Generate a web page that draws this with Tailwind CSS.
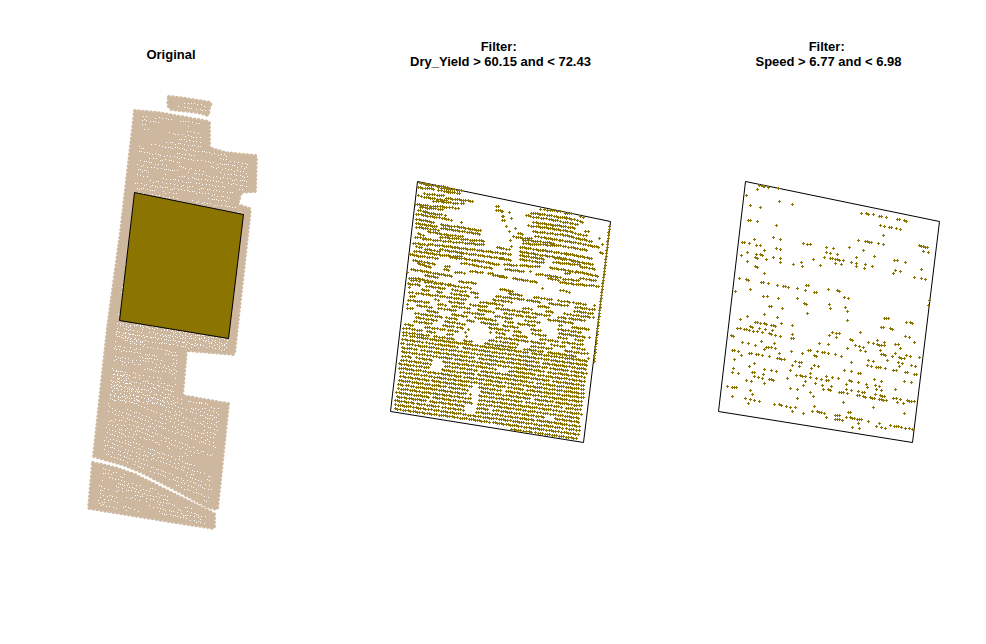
<!DOCTYPE html>
<html lang="en">
<head>
<meta charset="utf-8">
<meta name="viewport" content="width=device-width, initial-scale=1">
<title>Yield data filters</title>
<script src="https://cdn.jsdelivr.net/npm/@tailwindcss/browser@4"></script>
</head>
<body class="min-h-screen bg-white text-black font-['Liberation_Sans',Arial,sans-serif]">
<main class="grid grid-cols-[342fr_317fr_327fr] pt-[39px]">
  <figure class="flex flex-col gap-[11px]">
    <figcaption class="flex h-[30px] items-center justify-center text-center text-[13px] leading-[15px] font-bold">Original</figcaption>
    <svg class="block h-auto w-full" viewBox="0 80 342 560" role="img" aria-label="Original field points">
      <g fill="#cdb79e" stroke="#cdb79e" stroke-width="4" stroke-linecap="round" stroke-dasharray="0 4">
        <polygon points="169,97 180,98 211,103 209,108 208,115 198,112 171,109 168,105"/>
        <polygon points="135,111 158,113 209,122 209,148 225,153 256,156 255,191 241,192 237,205 250,209 234,354 186,350 182,396 228,404 217,509 208,507 175,489 142,472 125,465 94,456 108,327 121,232"/>
        <polygon points="93,463 115,468 135,475 175,495 214,514 214,528 175,522 89,508"/>
      </g>
      <path id="voids" fill="#fff" shape-rendering="crispEdges"/>
      <polygon points="134.5,192.5 243.5,214.5 228.5,338.5 119.5,320.5" fill="#8b7500" stroke="#000"/>
    </svg>
  </figure>
  <figure class="flex flex-col gap-[11px]">
    <figcaption class="flex h-[30px] items-center justify-center text-center text-[13px] leading-[15px] font-bold">Filter:&nbsp;<br>Dry_Yield &gt; 60.15 and &lt; 72.43</figcaption>
    <svg class="block h-auto w-full" viewBox="342 80 317 560" role="img" aria-label="Points filtered by dry yield">
      <polygon points="417.5,181.5 610.5,221.5 583.5,442.5 390.5,411.5" fill="none" stroke="#000"/>
      <path id="yield" fill="#8b7500" shape-rendering="crispEdges"/>
    </svg>
  </figure>
  <figure class="flex flex-col gap-[11px]">
    <figcaption class="flex h-[30px] items-center justify-center pl-3 text-center text-[13px] leading-[15px] font-bold">Filter:&nbsp;<br>Speed &gt; 6.77 and &lt; 6.98</figcaption>
    <svg class="block h-auto w-full" viewBox="659 80 327 560" role="img" aria-label="Points filtered by speed">
      <polygon points="745.5,181.5 939.5,221.5 912.5,442.5 718.5,411.5" fill="none" stroke="#000"/>
      <path id="speed" fill="#8b7500" shape-rendering="crispEdges"/>
    </svg>
  </figure>
</main>
<script>
let seed = 7;
const rnd = () => (seed = (seed * 16807) % 2147483647) / 2147483647;
const plus = (x, y) => { x = Math.floor(x); y = Math.floor(y); return `M${x-1} ${y}h3v1h-3zM${x} ${y-1}h1v3h-1z`; };
const inside = (poly, x, y) => {
  let r = false;
  for (let i = 0, j = poly.length - 1; i < poly.length; j = i++) {
    const [a, b] = poly[i], [c, d] = poly[j];
    if ((b > y) !== (d > y) && x < (c - a) * (y - b) / (d - b) + a) r = !r;
  }
  return r;
};

// Gaps between the points of the original field
const field = [[135,111],[158,113],[209,122],[209,148],[225,153],[256,156],[255,191],[241,192],[237,205],[250,209],[234,354],[186,350],[182,396],[228,404],[217,509],[208,507],[175,489],[142,472],[125,465],[94,456],[108,327],[121,232]];
const foot = [[93,463],[115,468],[135,475],[175,495],[214,514],[214,528],[175,522],[89,508]];
const cap = [[169,97],[211,103],[208,115],[171,109]];
let d = '';
const voids = (poly, y0, y1, slope, gap, mx, my, p) => {
  for (let r = y0; r < y1; r += gap) {
    let on = true;
    for (let x = 88; x < 258; x += 2 + Math.floor(rnd() * 2.9)) {
      if (rnd() < 0.25) on = rnd() < p;
      const y = r + (x - 88) * slope + Math.floor(rnd() * 1.5);
      if (on && y < y1 && inside(poly, x - mx, y) && inside(poly, x + mx, y) && inside(poly, x, y - my) && inside(poly, x, y + my))
        d += `M${x} ${Math.floor(y)}h1v1h-1z`;
    }
  }
};
voids(field, 84, 345, 0.15, 4.6, 8, 2, 0.75);
seed = 31;
voids(field, 312, 404, 0.17, 3.6, 8, 2, 0.65);
voids(field, 355, 510, 0.38, 4.4, 8, 2, 0.75);
voids(foot, 440, 530, 0.25, 3.6, 8, 3, 0.6);
voids(cap, 88, 118, 0.15, 5, 4, 3, 0.5);
document.getElementById('voids').setAttribute('d', d);

// Dry yield: runs of points [x1, y1, x2, y2] at three units per pixel
const runs = [
 [385,175,[[104,22,132,32],[120,28,190,38],[160,38,230,48],[100,38,150,43],[160,46,205,54],[190,50,230,58],[118,56,180,63],[100,62,115,66],[185,70,265,79],[118,66,185,78],[145,78,222,86],[230,84,240,88],[92,88,150,95],[150,93,222,101],[105,97,175,104],[100,106,125,110],[120,113,170,120],[180,121,182,121],[95,117,150,127],[155,127,203,136],[228,142,229,142],[95,133,150,143],[95,145,160,156],[170,149,200,155],[200,153,293,168],[170,160,290,178],[95,157,165,166],[100,175,118,181],[130,170,165,176],[170,178,240,186],[165,187,300,199],[90,187,125,190],[115,192,190,200],[190,200,300,210],[85,204,130,211],[130,208,210,217],[210,218,360,236],[95,215,115,220],[120,222,165,230],[165,224,230,234],[230,234,360,252],[88,228,170,241],[76,238,100,242],[165,241,230,246],[88,242,160,250],[195,247,230,252],[230,250,270,257],[270,256,340,270],[85,256,150,268],[100,266,140,278],[180,275,192,275],[177,284,192,286],[230,264,320,280],[68,292,69,292],[80,283,200,303],[210,292,240,295],[255,288,295,294],[310,295,325,297],[72,310,88,310],[120,301,160,308],[90,310,150,322],[160,325,200,330],[222,320,270,325],[325,300,360,306],[333,94,345,96],[335,105,357,109],[353,124,354,136],[337,217,350,220]]],
 [500,175,[[120,102,121,102],[132,104,185,111],[195,115,215,117],[240,125,252,127],[95,114,120,118],[120,118,200,130],[200,128,250,142],[80,121,105,127],[110,127,180,138],[180,140,235,149],[100,142,160,151],[160,150,225,160],[85,152,150,160],[150,160,210,170],[210,170,250,182],[255,168,265,171],[260,182,261,182],[55,175,72,178],[100,170,190,180],[190,180,275,200],[298,190,299,190],[308,208,309,208],[50,188,100,192],[105,184,180,196],[180,196,250,208],[250,208,298,217],[70,195,160,205],[70,206,170,212],[170,210,260,225],[60,217,130,228],[130,226,200,238],[200,236,280,252],[300,232,308,236],[5,220,30,224],[0,235,35,238],[60,230,120,240],[120,240,200,252],[60,241,130,253],[60,254,130,264],[165,250,220,256],[160,262,240,270],[220,258,285,270],[0,250,35,256],[150,278,230,292],[240,275,285,283],[12,268,50,272],[60,272,125,275],[15,283,70,290],[90,290,91,290],[195,295,210,297],[230,290,300,305],[110,298,130,300],[135,300,180,308],[190,312,240,318],[240,310,290,318],[0,305,20,308],[40,310,110,322],[145,310,180,318],[180,322,220,328],[230,328,300,334],[128,340,129,340],[0,342,40,350],[180,345,212,353],[3,108,4,108],[28,112,29,112],[10,125,11,125],[35,130,36,130],[8,137,22,139],[18,155,19,155],[28,168,29,168],[46,160,47,160],[30,196,31,196],[40,185,41,185],[35,214,36,214]]]
];
d = '';
for (const [ox, oy, list] of runs) for (const [a, b, c, e] of list) {
  for (let x = a; x <= c; x += rnd() < 0.75 ? 6 : 9) {
    const t = c > a ? (x - a) / (c - a) : 0;
    d += plus(ox + x / 3, oy + (b + t * (e - b)) / 3);
  }
}
const box = [[417,181],[610,221],[583,442],[390,411]];
// Areas without points: centre x, centre y, radius x, radius y
const holes = [[437,364,6,7],[475,396,4,11],[470,409,6,6],[478,334,12,9],[487,293,9,9],[535,283,26,5],[548,327,9,7],[505,369,8,2],[550,417,6,2],[520,305,14,3],[459,337,6,5],[427,298,8,3],[560,310,10,3],[583,325,10,3],[445,313,8,3]];
const fill = (from, to, gap, on, off) => {
  for (let r = from; r < to; r += gap) {
    let left = 0;
    for (let x = 385 + Math.floor(rnd() * 6); x < 606; x += rnd() < 0.7 ? 2 : 3) {
      if (left-- <= 0) { left = on * (0.3 + rnd() * 1.4); x += Math.floor(off * rnd()); }
      const y = r + (x - 425) * 0.14;
      if (inside(box, x - 3, y) && inside(box, x + 5, y) && inside(box, x, y + 1) && !holes.some(([a, b, c, e]) => ((x - a) / c) ** 2 + ((y - b) / e) ** 2 < 1)) d += plus(x, y);
    }
  }
};
fill(282, 337, 4.1, 5, 13);
fill(338.5, 426, 4.15, 18, 4);
for (let y = 226; y < 362; y += 3) d += plus(610 - (y - 222) * 0.115, y);
document.getElementById('yield').setAttribute('d', d);

// Speed: single points, three units per pixel
const pts = [
 [710,175,[149,31,155,31,160,33,164,34,176,37,143,43,206,40,110,61,209,79,248,88,122,91,152,97,115,136,122,136,143,139,200,151,191,187,212,193,134,193,97,202,103,202,119,205,140,211,152,211,200,220,212,223,164,226,113,232,95,241,140,238,152,238,157,241,137,247,143,250,170,253,191,247,212,250,212,262,113,259,137,274,143,277,164,295,281,205,293,208,301,208,350,217,350,232,344,247,311,253,275,262,251,268,278,274,332,271,89,310,110,313,116,316,155,322,161,322,176,325,203,331,221,334,227,334,236,337,263,340,289,331,295,331,287,346,314,352,320,352,356,343,77,349,122,343,161,364,173,364,206,370,263,370,284,385,290,388,179,394,185,394,218,400,358,388,164,418,293,415]],
 [825,175,[110,115,125,115,130,118,146,118,164,124,170,124,185,127,218,133,224,133,238,136,245,139,167,151,179,154,194,157,200,157,215,160,227,163,176,181,101,196,122,199,128,199,134,202,140,202,161,205,176,208,284,211,290,214,296,214,301,217,308,217,296,229,311,232,5,217,26,220,74,217,116,226,5,232,17,235,38,238,149,244,95,247,17,250,23,250,32,253,38,253,44,256,56,256,32,265,50,268,80,262,95,265,95,274,122,268,119,280,143,274,209,256,218,256,242,262,212,286,227,289,206,295,290,283,269,307,290,310,302,313,313,376,311,391,11,343,38,346,44,349,59,367,71,370,14,388,17,400,62,397,68,409]],
 [710,310,[113,19,164,13,203,22,92,28,137,37,143,37,152,40,164,40,170,43,185,46,191,46,197,49,215,40,248,46,122,49,128,52,149,55,83,55,92,55,104,58,110,58,119,61,131,64,143,64,167,58,188,61,158,67,179,70,185,73,197,76,212,79,65,76,71,79,248,73,245,85,251,85,155,94,98,97,116,100,137,106,194,100,170,112,176,112,185,112,197,115,164,118,68,121,74,121,86,124,95,136,119,130,125,130,140,133,146,133,158,136,179,139,209,130,245,124,74,148,203,145,209,145,215,148,224,148,296,121,302,121,278,130,329,100,323,124,338,127,344,127,356,130,314,136,320,139,257,154,269,157,275,157,248,166,269,169,242,181,134,160,119,169,71,175,68,187,86,190,164,178,185,181,200,184,128,187,134,187,161,193,134,199,146,202,158,205,179,208,185,208,191,211,164,220,110,211,125,214,233,205,260,196,272,196,278,199,287,199,302,190,314,166,326,169,305,175,302,202,320,205,335,208,350,199,350,211,287,214,281,226,317,220,338,226,341,238,242,235,263,238,302,247,311,259,263,265,53,229,68,232,74,232,80,232,122,241,128,253,68,259,107,265,122,268,134,271,149,274,116,280,194,283,209,283,215,286,230,289,242,292,257,292,248,304,281,310,308,304,314,289,323,304,329,307,335,307,344,310,350,322]],
 [825,310,[68,4,68,31,179,25,185,25,191,25,245,37,257,37,263,40,170,52,176,52,197,55,203,58,23,67,14,76,35,70,44,70,35,82,107,67,77,88,83,91,242,79,254,82,269,97,11,103,68,115,92,106,104,109,116,112,107,121,122,124,131,97,146,100,158,91,158,103,164,106,170,106,179,97,179,106,212,103,221,103,227,115,167,121,170,133,176,133,182,136,212,130,203,139,11,130,32,133,50,139,224,142,230,145,239,145,245,136,257,139,284,142,80,157,131,151,146,154,188,151,221,157,233,160,128,166,140,169,155,172,161,172,167,172,182,175,224,169,260,166,272,169,59,181,80,184,101,190,107,190,206,181,215,181,242,187,248,187,269,193,275,193,5,199,23,202,41,205,5,211,11,211,74,211,80,214,101,217,149,208,170,214,65,223,125,223,128,232,152,226,164,229,239,214,260,217,212,238,20,229,11,238,17,241,65,238,80,241,155,238,170,241,44,247,50,247,56,247,68,250,101,244,113,247,119,247,98,256,104,256,116,259,122,262,152,253,137,262,143,265,149,265,167,256,173,259,179,259,164,268,170,268,176,271,185,271,206,265,215,265,227,268,218,277,236,280,248,271,254,274,260,274,269,274,56,277,146,292,239,310,71,307,77,307,32,316,38,316,44,316,5,322,32,328,38,328,44,328,53,331,65,322,77,322,83,325,89,325,98,328,104,328,110,328,131,334,101,340,83,352,104,355,164,340,155,349,170,352,182,355,197,346,209,349,215,349,221,349,230,352,242,355,254,355,263,358]]
];
d = '';
for (const [ox, oy, p] of pts) for (let i = 0; i < p.length; i += 2) d += plus(ox + p[i] / 3, oy + p[i + 1] / 3);
document.getElementById('speed').setAttribute('d', d);
</script>
</body>
</html>
